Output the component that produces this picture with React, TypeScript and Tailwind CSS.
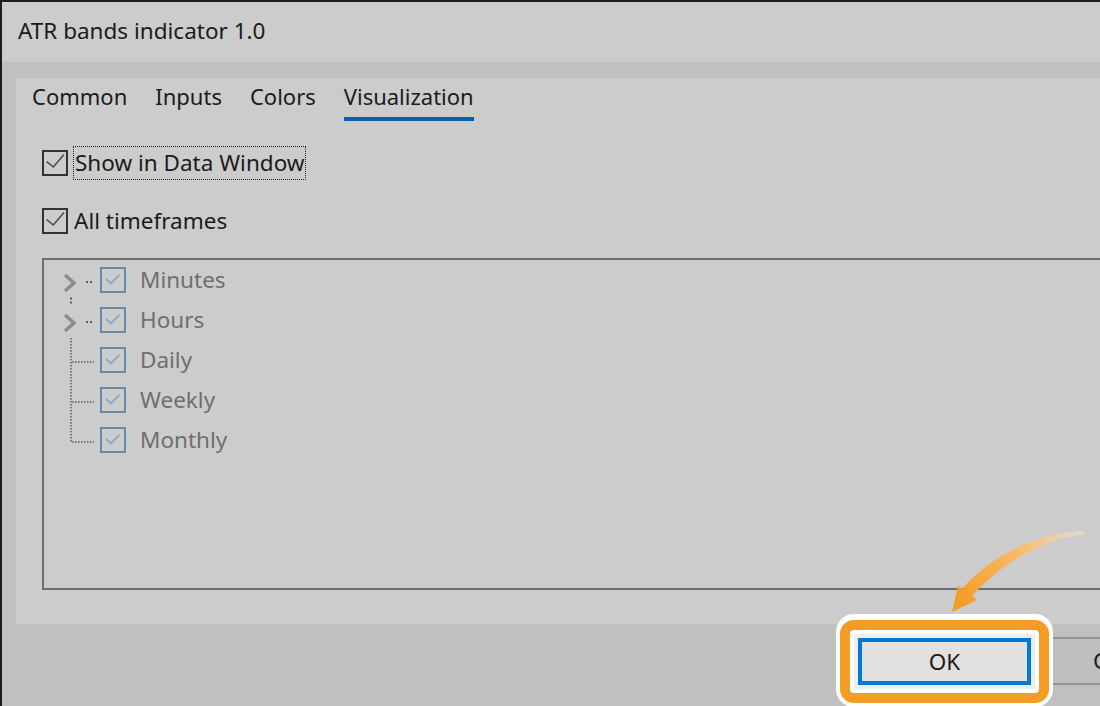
import React from "react";

const tabs = ["Common", "Inputs", "Colors", "Visualization"];
const frames = ["Minutes", "Hours", "Daily", "Weekly", "Monthly"];

function MainCheck() {
  return (
    <div className="w-[26px] h-[26px] shrink-0 border-2 border-[#333333]">
      <svg width="22" height="22" viewBox="0 0 22 22">
        <path d="M2.7 9.7 L9.3 15 L20 2.5" fill="none" stroke="#4d4d4d" strokeWidth="1.6" />
      </svg>
    </div>
  );
}

function TreeCheck() {
  return (
    <div className="w-[26px] h-[26px] shrink-0 border-2 border-[#6589ab]">
      <svg width="22" height="22" viewBox="0 0 22 22">
        <path d="M4 10 L9 14.3 L17.3 6" fill="none" stroke="#86a7c7" strokeWidth="1.8" />
      </svg>
    </div>
  );
}

// chevrons + dotted guide lines on the left of the timeframe tree
function TreeGutter() {
  const dot = "#5a5a5a";
  return (
    <svg width="56" height="200" viewBox="0 0 56 200" className="shrink-0">
      {[0, 40].map((o) => (
        <g key={o}>
          <path
            d={`M21 ${15 + o} L30 ${23 + o} L21 ${31 + o}`}
            fill="none"
            stroke="#8c8c8c"
            strokeWidth="3.5"
          />
          <rect x="42" y={21 + o} width="2" height="2" fill={dot} />
          <rect x="46" y={21 + o} width="2" height="2" fill={dot} />
        </g>
      ))}
      <rect x="26" y="37.5" width="2" height="2" fill={dot} />
      <rect x="26" y="41.5" width="2" height="2" fill={dot} />
      <line x1="27" y1="78" x2="27" y2="183" stroke={dot} strokeWidth="1.5" strokeDasharray="1.5 1.5" />
      {[102, 142, 182].map((y) => (
        <line key={y} x1="28" y1={y} x2="50" y2={y} stroke={dot} strokeWidth="1.5" strokeDasharray="1.5 1.5" />
      ))}
    </svg>
  );
}

export default function App() {
  return (
    <div className="relative w-[1100px] h-[706px] overflow-hidden bg-[#1c1c1c] pl-[2px] pt-[2px] pb-[2px] font-['Noto_Sans',sans-serif] text-[22.5px] text-[#1b1b1b]">
      <div className="flex flex-col h-full">
        {/* title bar */}
        <div className="h-[60px] shrink-0 bg-[#cccccc] flex items-center pl-[16px] pb-[3px]">
          ATR bands indicator 1.0
        </div>

        <div className="flex-1 flex flex-col bg-[#c0c0c0]">
          {/* tab panel */}
          <div className="ml-[14px] mt-[16px] h-[546px] shrink-0 bg-[#cccccc] flex flex-col">
            <div className="flex gap-[28px] pl-[16px] pt-[3px] text-[22px]">
              {tabs.map((t) => (
                <div
                  key={t}
                  className={`leading-[30px] pb-[6px] border-b-4 ${
                    t === "Visualization" ? "border-[#0a5fb4]" : "border-transparent"
                  }`}
                >
                  {t}
                </div>
              ))}
            </div>

            <div className="pl-[26px] flex flex-col">
              <div className="mt-[25px] h-[34px] flex items-center">
                <MainCheck />
                <div className="ml-[5px] h-[34px] flex items-center px-[1px] border border-dotted border-[#222222]">
                  Show in Data Window
                </div>
              </div>
              <div className="mt-[24px] h-[34px] flex items-center">
                <MainCheck />
                <div className="ml-[6px]">All timeframes</div>
              </div>

              {/* timeframe tree */}
              <div className="mt-[20px] h-[332px] border-2 border-r-0 border-[#6b6e73] flex items-start">
                <TreeGutter />
                <div className="flex flex-col">
                  {frames.map((f) => (
                    <div key={f} className="h-[40px] flex items-center">
                      <TreeCheck />
                      <span className="ml-[14px] text-[#6f6f6f]">{f}</span>
                    </div>
                  ))}
                </div>
              </div>
            </div>
          </div>

          {/* buttons */}
          <div className="flex-1 flex items-start">
            <div className="relative z-10 shrink-0 ml-[834px] -mt-[10px] w-[217px] h-[93px] rounded-[18px] bg-white pt-[6px] px-[4px]">
              <div className="rounded-[14px] border-[10px] border-[#f49d25] bg-white p-[4px]">
                <div className="bg-[#efefef] p-[4px]">
                  <div className="h-[47px] border-4 border-[#0078d7] bg-[#e1e1e1] flex items-center justify-center">
                    OK
                  </div>
                </div>
              </div>
            </div>
            <div className="shrink-0 -ml-[15px] mt-[13px] w-[180px] h-[48px] border-y-2 border-[#939393] bg-[#bfbfbf] flex items-center justify-center">
              Cancel
            </div>
          </div>
        </div>
      </div>

      {/* pointer arrow */}
      <svg
        className="absolute left-0 top-0 z-20 pointer-events-none"
        width="1100"
        height="706"
        viewBox="0 0 1100 706"
      >
        <defs>
          <linearGradient id="arw" gradientUnits="userSpaceOnUse" x1="1084" y1="532" x2="960" y2="600">
            <stop offset="0" stopColor="#fbe3c2" stopOpacity="0.5" />
            <stop offset="0.45" stopColor="#f7bd6c" />
            <stop offset="1" stopColor="#f49d25" />
          </linearGradient>
        </defs>
        <path
          d="M1084 531 C1040 533 995 552 962 589 L958 586 L952 612 L977 600 L972 596 C1000 565 1040 540 1084 534 Z"
          fill="url(#arw)"
        />
      </svg>
    </div>
  );
}
